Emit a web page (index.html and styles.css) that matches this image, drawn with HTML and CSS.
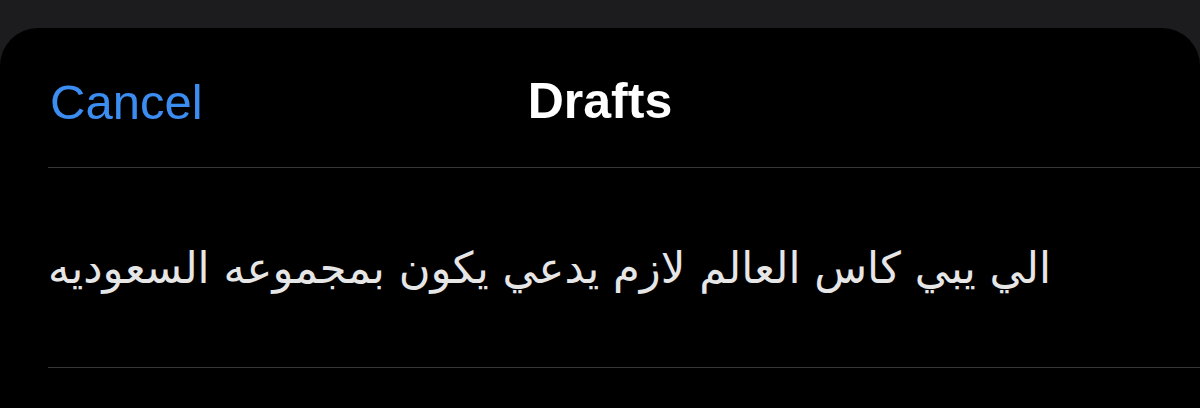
FILE: index.html
```html
<!DOCTYPE html>
<html>
<head>
<meta charset="utf-8">
<link rel="stylesheet" href="styles.css">
</head>
<body>
<div class="backdrop"></div>
<div class="sheet">
  <header class="nav">
    <span class="cancel">Cancel</span>
    <span class="title">Drafts</span>
  </header>
  <div class="row">
    <p class="draft" dir="rtl">الي يبي كاس العالم لازم يدعي يكون بمجموعه السعوديه</p>
  </div>
</div>
</body>
</html>
```
FILE: styles.css
```css
html, body {
  margin: 0;
  padding: 0;
  background: #1c1c1e;
  width: 1200px;
  height: 408px;
  overflow: hidden;
}
.backdrop {
  height: 28px;
  background: #1c1c1e;
}
.sheet {
  background: #000;
  border-radius: 38px 38px 0 0;
  height: 380px;
  padding-left: 48px;
  box-sizing: border-box;
}
.nav {
  position: relative;
  height: 139px;
  border-bottom: 1px solid #38383a;
  display: flex;
  align-items: center;
}
.cancel {
  font-family: "Liberation Sans", Arial, sans-serif;
  font-size: 49px;
  color: #3b8df2;
  padding-top: 8px;
  margin-left: 2px;
}
.title {
  position: absolute;
  left: -48px;
  right: 0;
  text-align: center;
  font-family: "Liberation Sans", Arial, sans-serif;
  font-weight: bold;
  font-size: 50px;
  color: #fff;
  padding-top: 6px;
  pointer-events: none;
}
.row {
  height: 199px;
  border-bottom: 1px solid #38383a;
  display: flex;
  align-items: center;
}
.draft {
  margin: 0;
  font-family: "DejaVu Sans", sans-serif;
  font-size: 43.3px;
  color: #e6e6e6;
  text-align: left;
  width: 100%;
  padding-right: 48px;
  box-sizing: border-box;
}
```
